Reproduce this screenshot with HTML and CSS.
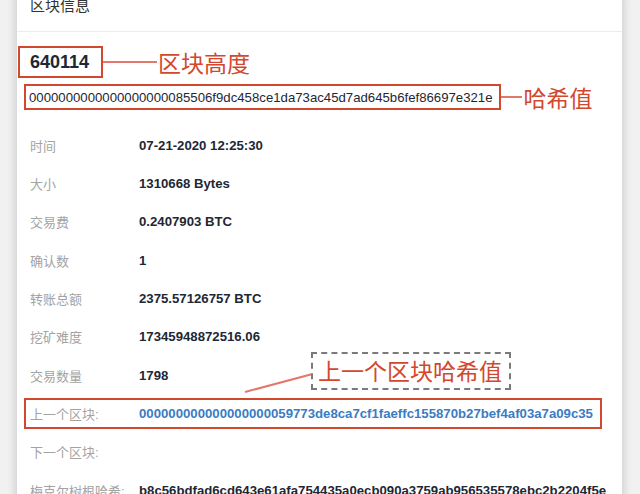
FILE: index.html
```html
<!DOCTYPE html>
<html lang="zh-CN">
  <head>
    <meta charset="UTF-8" />
    <meta name="viewport" content="width=device-width, initial-scale=1.0" />
    <title>区块信息</title>
    <link rel="stylesheet" href="styles.css">
  </head>
  <body>
    <div class="card">
      <div class="card-header">区块信息</div>

      <div class="card-body">
        <div class="note-row">
          <div class="mark-box height-box">640114</div>
          <span class="note-line height-line"></span>
          <span class="note-label">区块高度</span>
        </div>

        <div class="note-row hash-row">
          <div class="mark-box hash-box">0000000000000000000085506f9dc458ce1da73ac45d7ad645b6fef86697e321e</div>
          <span class="note-line hash-line"></span>
          <span class="note-label">哈希值</span>
        </div>

        <div class="rows">
          <div class="row">
            <span class="row-label">时间</span>
            <span class="row-value">07-21-2020 12:25:30</span>
          </div>
          <div class="row">
            <span class="row-label">大小</span>
            <span class="row-value">1310668 Bytes</span>
          </div>
          <div class="row">
            <span class="row-label">交易费</span>
            <span class="row-value">0.2407903 BTC</span>
          </div>
          <div class="row">
            <span class="row-label">确认数</span>
            <span class="row-value">1</span>
          </div>
          <div class="row">
            <span class="row-label">转账总额</span>
            <span class="row-value">2375.57126757 BTC</span>
          </div>
          <div class="row">
            <span class="row-label">挖矿难度</span>
            <span class="row-value">17345948872516.06</span>
          </div>
          <div class="row">
            <span class="row-label">交易数量</span>
            <span class="row-value">1798</span>
          </div>
          <div class="row row-marked">
            <span class="row-label">上一个区块:</span>
            <span class="row-value link">000000000000000000059773de8ca7cf1faeffc155870b27bef4af03a7a09c35</span>
          </div>
          <div class="row">
            <span class="row-label">下一个区块:</span>
            <span class="row-value"></span>
          </div>
          <div class="row">
            <span class="row-label">梅克尔树根哈希:</span>
            <span class="row-value">b8c56bdfad6cd643e61afa754435a0ecb090a3759ab956535578ebc2b2204f5e</span>
          </div>
        </div>
      </div>

      <!-- callout for the previous block hash -->
      <svg class="callout-arrow" width="80" height="28" viewBox="0 0 80 28">
        <line x1="3" y1="24" x2="78" y2="4" stroke="#e3786a" stroke-width="2" />
      </svg>
      <div class="callout">上一个区块哈希值</div>
    </div>
  </body>
</html>
```

FILE: styles.css
```css
:root {
  --page-bg: #f1f1f1;
  --card-bg: #ffffff;
  --divider: #ececec;
  --title: #333333;
  --label: #a3a3a3;
  --value: #1e2734;
  --link: #3a7cc4;
  --mark: #d2482e;
  --mark-line: #e3786a;
  --dash: #7a7a7a;
}

* {
  box-sizing: border-box;
  margin: 0;
  padding: 0;
}

body {
  background-color: var(--page-bg);
  font-family: "Liberation Sans", "Noto Sans CJK SC", Arial, sans-serif;
  overflow: hidden;
  height: 494px;
}

.card {
  position: relative;
  margin: -10px 18px 0 17px;
  background-color: var(--card-bg);
  box-shadow: 0 0 10px rgba(0, 0, 0, 0.2);
  min-height: 520px;
}

.card-header {
  padding: 8px 13px 18px;
  font-size: 15px;
  line-height: 15px;
  color: var(--title);
  border-bottom: 1px solid var(--divider);
}

.note-row {
  display: flex;
  align-items: center;
  margin-top: 14px;
}

.mark-box {
  border: 2px solid var(--mark);
  display: flex;
  align-items: center;
}

.height-box {
  margin-left: 1px;
  height: 32px;
  padding: 0 12px 0 10px;
  font-size: 18px;
  font-weight: 700;
  color: var(--value);
}

.note-line {
  height: 2px;
  background-color: var(--mark-line);
}

.height-line {
  width: 54px;
}

.note-label {
  margin-left: 1px;
  font-family: "Noto Sans CJK SC", sans-serif;
  font-size: 23px;
  line-height: 26px;
  color: var(--mark);
}

.hash-row {
  margin-top: 6px;
}

.hash-box {
  margin-left: 7px;
  height: 26px;
  padding: 0 6px 0 3px;
  font-size: 13.2px;
  color: var(--value);
}

.hash-line {
  width: 21px;
}

.hash-row .note-label {
  margin-left: 2px;
}

.rows {
  margin-top: 16px;
}

.row {
  display: flex;
  align-items: center;
  height: 38.33px;
  padding-left: 13px;
  white-space: nowrap;
}

.row-label {
  width: 109px;
  flex-shrink: 0;
  font-size: 13px;
  color: var(--label);
}

.row-value {
  font-size: 13.2px;
  font-weight: 700;
  color: var(--value);
}

.row-value.link {
  color: var(--link);
}

.row-marked {
  height: 31.33px;
  margin: 3.5px 20px 3.5px 7px;
  padding-left: 4px;
  border: 2px solid var(--mark);
}

.callout {
  position: absolute;
  left: 294px;
  top: 362px;
  width: 200px;
  height: 38px;
  border: 2px dashed var(--dash);
  padding-left: 5px;
  font-family: "Noto Sans CJK SC", sans-serif;
  font-size: 23px;
  line-height: 32px;
  white-space: nowrap;
  color: var(--mark);
  background-color: var(--card-bg);
}

.callout-arrow {
  position: absolute;
  left: 225px;
  top: 378px;
}
```
